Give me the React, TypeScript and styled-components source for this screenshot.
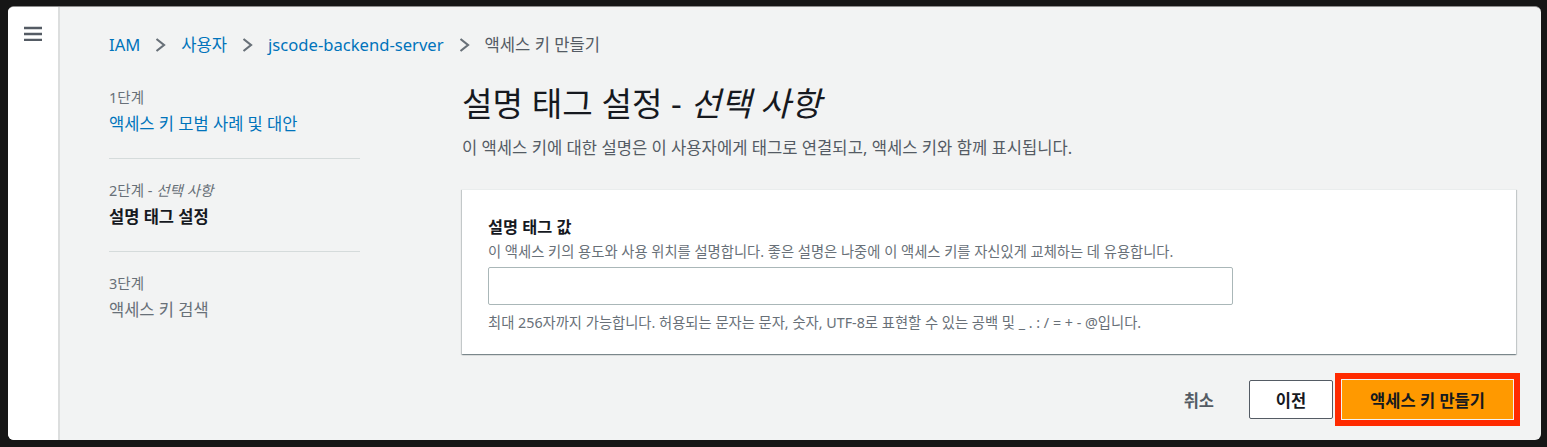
import styled, { createGlobalStyle } from "styled-components";

const GlobalStyle = createGlobalStyle`
  html, body {
    margin: 0;
    padding: 0;
    background: #161616;
  }
  body {
    font-family: "Noto Sans", "Noto Sans CJK KR", sans-serif;
    -webkit-font-smoothing: antialiased;
  }
  * { box-sizing: border-box; }
`;

const Frame = styled.div`
  width: 1547px;
  height: 447px;
  padding: 6px 6px 7px 8px;
`;

const Window = styled.div`
  display: flex;
  height: 100%;
  border-top: 1px solid #8d8d8d;
  border-radius: 6px;
  overflow: hidden;
  background: #f2f3f3;
`;

const NavStrip = styled.aside`
  width: 52px;
  flex-shrink: 0;
  background: #ffffff;
  border-right: 2px solid #dcdede;
  padding: 17px 0 0 16px;
  color: #545b64;
`;

const Content = styled.main`
  flex: 1;
  padding: 28px 25px 0 49px;
`;

const Breadcrumbs = styled.nav`
  display: flex;
  align-items: center;
  gap: 15px;
  height: 20px;
  font-size: 16.6px;
  line-height: 20px;
`;

const Crumb = styled.span<{ $current?: boolean }>`
  color: ${(p) => (p.$current ? "#545b64" : "#0073bb")};
  white-space: nowrap;
`;

const Columns = styled.div`
  display: grid;
  grid-template-columns: 251px 1fr;
  column-gap: 102px;
  margin-top: 30px;
`;

const Steps = styled.ol`
  list-style: none;
  margin: 0;
  padding: 2px 0 0;
`;

const Step = styled.li`
  padding: 21px 0 23px;
  border-bottom: 1px solid #d5dbdb;
  &:first-child { padding-top: 0; }
  &:last-child { border-bottom: none; }
`;

const StepLabel = styled.div`
  font-size: 14.5px;
  line-height: 20px;
  color: #687078;
  em { font-style: italic; }
`;

const StepTitle = styled.div<{ $state: "link" | "active" | "disabled" }>`
  margin-top: 6px;
  font-size: 16.5px;
  line-height: 22px;
  font-weight: ${(p) => (p.$state === "active" ? 700 : 400)};
  color: ${(p) =>
    p.$state === "link" ? "#0073bb" : p.$state === "active" ? "#16191f" : "#687078"};
`;

const Main = styled.section`
  display: flex;
  flex-direction: column;
`;

const Heading = styled.h1`
  margin: 0;
  font-size: 33.2px;
  line-height: 38px;
  font-weight: 400;
  color: #16191f;
  em { font-style: italic; }
`;

const Subtitle = styled.p`
  margin: 14px 0 0;
  font-size: 16.6px;
  line-height: 22px;
  color: #545b64;
`;

const Card = styled.div`
  margin-top: 30px;
  background: #ffffff;
  border-top: 1px solid #eaeded;
  padding: 26px 26px 22px;
  box-shadow: 0 1px 1px 0 rgba(0, 28, 36, 0.3), 1px 1px 1px 0 rgba(0, 28, 36, 0.15),
    -1px 1px 1px 0 rgba(0, 28, 36, 0.15);
`;

const FieldLabel = styled.label`
  display: block;
  font-size: 16.3px;
  line-height: 22px;
  font-weight: 700;
  color: #16191f;
`;

const FieldHint = styled.div<{ $gap: number }>`
  margin-top: ${(p) => p.$gap}px;
  font-size: 14.3px;
  line-height: 18px;
  color: #687078;
`;

const TextInput = styled.input`
  display: block;
  width: 745px;
  height: 38px;
  margin-top: 6px;
  border: 1px solid #aab7b8;
  border-radius: 2px;
  background: #ffffff;
  font: inherit;
`;

const Actions = styled.div`
  display: flex;
  justify-content: flex-end;
  align-items: center;
  margin-top: 26px;
  padding-right: 3px;
`;

const Button = styled.button<{ $variant: "link" | "normal" | "primary" }>`
  height: 39px;
  border-radius: ${(p) => (p.$variant === "primary" ? "0" : "2px")};
  font-family: inherit;
  font-size: 16.5px;
  font-weight: 700;
  cursor: pointer;
  padding: 0 18px;
  border: 1px solid
    ${(p) => (p.$variant === "normal" ? "#545b64" : p.$variant === "primary" ? "#ff9900" : "transparent")};
  background: ${(p) =>
    p.$variant === "primary" ? "#ff9900" : p.$variant === "normal" ? "#ffffff" : "transparent"};
  color: ${(p) => (p.$variant === "link" ? "#545b64" : "#16191f")};
  width: ${(p) => (p.$variant === "normal" ? "84px" : p.$variant === "primary" ? "171px" : "auto")};
  margin-left: ${(p) => (p.$variant === "normal" ? "16px" : p.$variant === "primary" ? "9px" : "0")};
  ${(p) =>
    p.$variant === "primary" &&
    `
    outline: 6px solid #ff2a00;
    outline-offset: 1px;
  `}
`;

const MenuIcon = () => (
  <svg width="18" height="15" viewBox="0 0 18 15">
    <g stroke="currentColor" strokeWidth="2.4">
      <line x1="0" y1="2" x2="18" y2="2" />
      <line x1="0" y1="8" x2="18" y2="8" />
      <line x1="0" y1="14" x2="18" y2="14" />
    </g>
  </svg>
);

const Chevron = () => (
  <svg width="11" height="14" viewBox="0 0 11 14" style={{ flexShrink: 0 }}>
    <polyline points="1.5,1 9,7 1.5,13" fill="none" stroke="#687078" strokeWidth="2.2" />
  </svg>
);

export default function App() {
  return (
    <Frame>
      <GlobalStyle />
      <Window>
        <NavStrip>
          <MenuIcon />
        </NavStrip>
        <Content>
          <Breadcrumbs>
            <Crumb>IAM</Crumb>
            <Chevron />
            <Crumb>사용자</Crumb>
            <Chevron />
            <Crumb>jscode-backend-server</Crumb>
            <Chevron />
            <Crumb $current>액세스 키 만들기</Crumb>
          </Breadcrumbs>
          <Columns>
            <Steps>
              <Step>
                <StepLabel>1단계</StepLabel>
                <StepTitle $state="link">액세스 키 모범 사례 및 대안</StepTitle>
              </Step>
              <Step>
                <StepLabel>
                  2단계 - <em>선택 사항</em>
                </StepLabel>
                <StepTitle $state="active">설명 태그 설정</StepTitle>
              </Step>
              <Step>
                <StepLabel>3단계</StepLabel>
                <StepTitle $state="disabled">액세스 키 검색</StepTitle>
              </Step>
            </Steps>
            <Main>
              <Heading>
                설명 태그 설정 - <em>선택 사항</em>
              </Heading>
              <Subtitle>
                이 액세스 키에 대한 설명은 이 사용자에게 태그로 연결되고, 액세스 키와 함께 표시됩니다.
              </Subtitle>
              <Card>
                <FieldLabel>설명 태그 값</FieldLabel>
                <FieldHint $gap={5}>
                  이 액세스 키의 용도와 사용 위치를 설명합니다. 좋은 설명은 나중에 이 액세스 키를 자신있게
                  교체하는 데 유용합니다.
                </FieldHint>
                <TextInput type="text" />
                <FieldHint $gap={9}>
                  최대 256자까지 가능합니다. 허용되는 문자는 문자, 숫자, UTF-8로 표현할 수 있는 공백 및 _ . : /
                  = + - @입니다.
                </FieldHint>
              </Card>
              <Actions>
                <Button $variant="link">취소</Button>
                <Button $variant="normal">이전</Button>
                <Button $variant="primary">액세스 키 만들기</Button>
              </Actions>
            </Main>
          </Columns>
        </Content>
      </Window>
    </Frame>
  );
}
